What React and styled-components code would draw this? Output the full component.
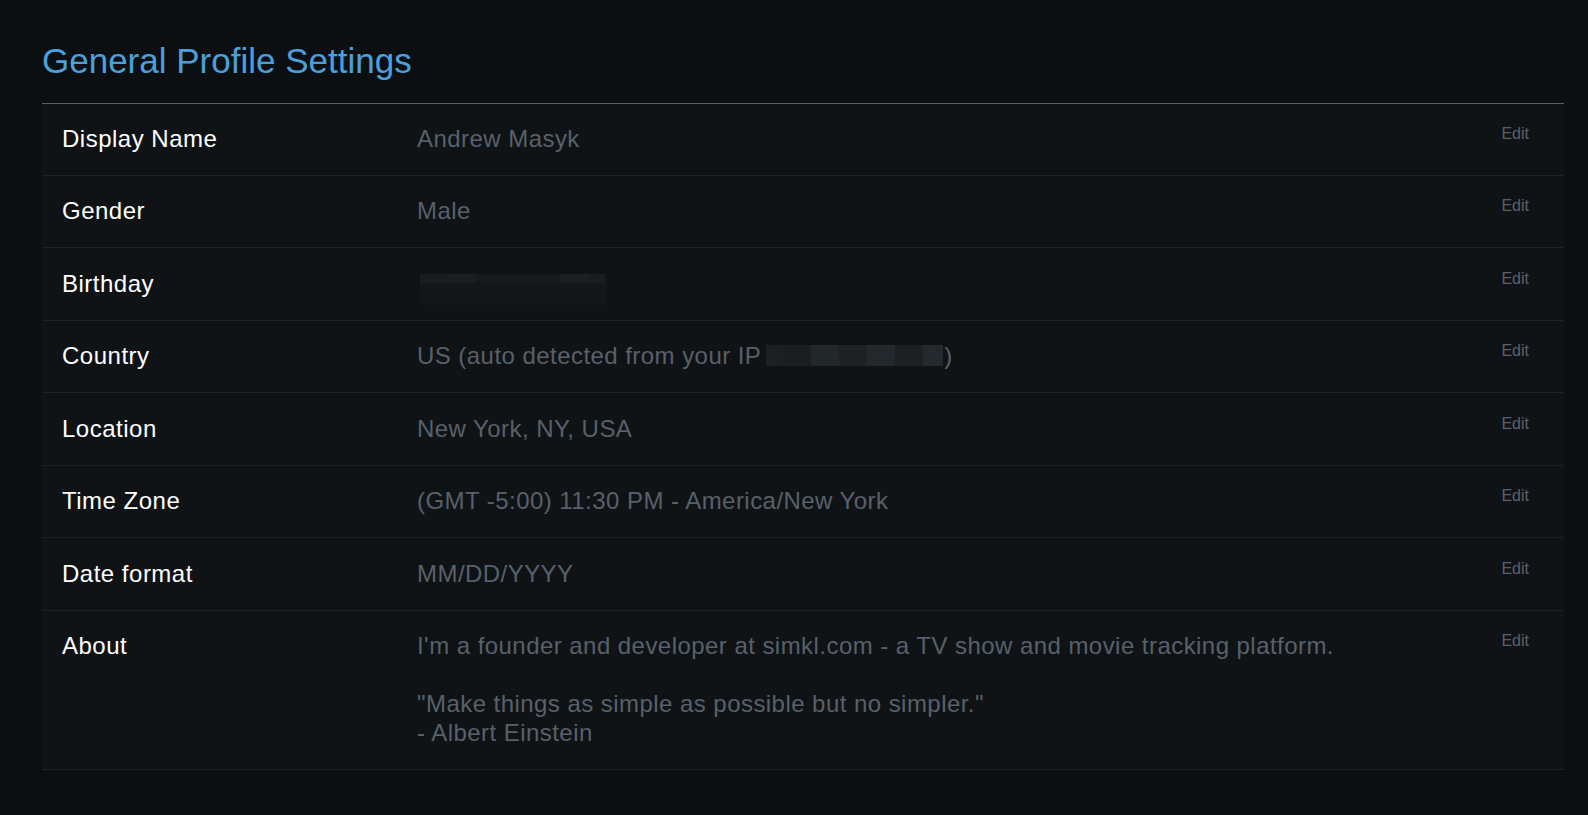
import React from "react";
import styled, { createGlobalStyle } from "styled-components";

const GlobalStyle = createGlobalStyle`
  html, body {
    margin: 0;
    padding: 0;
    background: #0c0f12;
  }
  body {
    font-family: "Liberation Sans", Arial, sans-serif;
    min-height: 815px;
  }
`;

const Page = styled.div`
  padding: 41px 24px 40px 42px;
  background: #0c0f12;
  min-height: 815px;
  box-sizing: border-box;
`;

const Title = styled.h1`
  margin: 0 0 21.5px 0;
  font-size: 35px;
  line-height: 40px;
  font-weight: 400;
  color: #4ba0dc;
`;

const Table = styled.div`
  border-top: 1px solid #5b6067;
  background: #101316;
`;

const Row = styled.div`
  display: grid;
  grid-template-columns: 375px 1fr auto;
  align-items: start;
  border-bottom: 1px solid #1e2226;
`;

const Label = styled.div`
  padding: 21.35px 0 21.35px 20px;
  font-size: 24px;
  line-height: 28.8px;
  letter-spacing: 0.5px;
  color: #ffffff;
`;

const Value = styled.div`
  padding: 21.35px 0;
  font-size: 24px;
  line-height: 28.8px;
  letter-spacing: 0.45px;
  color: #58606a;
  white-space: pre-line;
`;

const EditLink = styled.a`
  padding: 21.35px 35px 0 20px;
  font-size: 16px;
  line-height: normal;
  color: #59606a;
  text-decoration: none;
  cursor: pointer;
`;

const Mosaic = styled.svg`
  display: ${(p) => (p.$block ? "block" : "inline-block")};
  vertical-align: ${(p) => p.$align || "middle"};
  margin: ${(p) => p.$margin || "0"};
`;

const BirthdayMosaic = () => (
  <Mosaic width="186" height="31" viewBox="0 0 186 31" $block $margin="4px 0 -6.2px 3px">
    <rect x="0" y="0" width="186" height="31" fill="#141719" />
    <rect x="0" y="0" width="28" height="9" fill="#1a1d20" />
    <rect x="28" y="0" width="28" height="9" fill="#1b1e21" />
    <rect x="56" y="0" width="28" height="9" fill="#17191c" />
    <rect x="84" y="0" width="28" height="9" fill="#17191c" />
    <rect x="112" y="0" width="28" height="9" fill="#171a1d" />
    <rect x="140" y="0" width="28" height="9" fill="#1c1f22" />
    <rect x="168" y="0" width="18" height="9" fill="#1a1d20" />
    <rect x="0" y="9" width="112" height="22" fill="#141719" />
    <rect x="112" y="9" width="28" height="22" fill="#131618" />
    <rect x="140" y="9" width="46" height="22" fill="#141719" />
  </Mosaic>
);

const IpMosaic = () => (
  <Mosaic width="177" height="21" viewBox="0 0 177 21" $margin="0 1px 0 5px" $align="-2px">
    <rect x="0" y="0" width="17" height="21" fill="#1c2023" />
    <rect x="17" y="0" width="28" height="21" fill="#1a1e21" />
    <rect x="45" y="0" width="28" height="21" fill="#22272a" />
    <rect x="73" y="0" width="28" height="21" fill="#1e2225" />
    <rect x="101" y="0" width="28" height="21" fill="#22282b" />
    <rect x="129" y="0" width="28" height="21" fill="#1c2023" />
    <rect x="157" y="0" width="20" height="21" fill="#23292c" />
  </Mosaic>
);

const rows = [
  { label: "Display Name", value: "Andrew Masyk" },
  { label: "Gender", value: "Male" },
  { label: "Birthday", value: <BirthdayMosaic /> },
  {
    label: "Country",
    value: (
      <>
        US (auto detected from your IP
        <IpMosaic />)
      </>
    ),
  },
  { label: "Location", value: "New York, NY, USA" },
  { label: "Time Zone", value: "(GMT -5:00) 11:30 PM - America/New York" },
  { label: "Date format", value: "MM/DD/YYYY" },
  {
    label: "About",
    value:
      "I'm a founder and developer at simkl.com - a TV show and movie tracking platform.\n\n\"Make things as simple as possible but no simpler.\"\n- Albert Einstein",
  },
];

export default function App() {
  return (
    <>
      <GlobalStyle />
      <Page>
        <Title>General Profile Settings</Title>
        <Table>
          {rows.map((r) => (
            <Row key={r.label}>
              <Label>{r.label}</Label>
              <Value>{r.value}</Value>
              <EditLink>Edit</EditLink>
            </Row>
          ))}
        </Table>
      </Page>
    </>
  );
}
